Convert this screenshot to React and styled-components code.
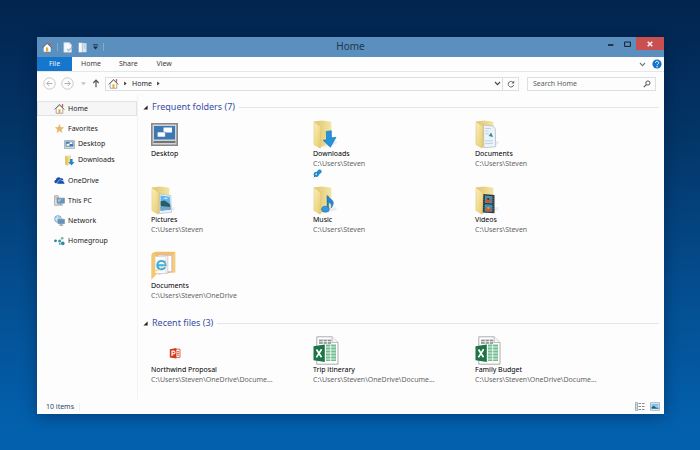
import styled, { createGlobalStyle } from "styled-components";

const GlobalStyle = createGlobalStyle`
  * {
    box-sizing: border-box;
  }

  body {
    margin: 0;
    font-family: "Noto Sans", "Open Sans", sans-serif;
    font-size: 7px;
    line-height: 10px;
    color: #1b1b1b;
  }

  button,
  input {
    font: inherit;
    color: inherit;
    border: 0;
    padding: 0;
    margin: 0;
    background: none;
  }
`;

const Desktop = styled.div`
  display: flex;
  min-height: 100vh;
  padding: 37px 36px 36px 37px;
  background: linear-gradient(#02244f 0%, #033567 30%, #044c8d 62%, #0360ad 95%, #0360ad 100%);
`;

const Window = styled.main`
  display: flex;
  flex-direction: column;
  flex: 1;
  min-width: 0;
  background: #fdfdfe;
  box-shadow: 0 2px 14px rgba(0, 15, 45, 0.4);
`;

const TitleBar = styled.header`
  display: grid;
  grid-template-columns: 1fr auto 1fr;
  height: 20px;
  background: #5a8fbe;
`;

const QuickAccess = styled.div`
  display: flex;
  align-items: center;
  gap: 5px;
  padding-left: 5px;
`;

const Separator = styled.span`
  width: 1px;
  height: 8px;
  background: ${(props) => props.$color || "#86a9c9"};
`;

const IconButton = styled.button`
  display: flex;
  align-items: center;
  justify-content: center;
  flex: none;
  width: ${(props) => props.$width || 10}px;
`;

const Title = styled.h1`
  margin: 0;
  font-size: 10px;
  font-weight: 400;
  line-height: 19px;
  color: #22384e;
`;

const Controls = styled.div`
  display: flex;
  justify-content: flex-end;
  align-items: flex-start;
`;

const ControlButton = styled.button`
  display: flex;
  align-items: center;
  justify-content: center;
  width: ${(props) => (props.$close ? 28 : 17)}px;
  height: 13px;
  background: ${(props) => (props.$close ? "#c94f50" : "transparent")};
`;

const Ribbon = styled.div`
  display: flex;
  align-items: center;
  height: 15px;
  padding-right: 2px;
  border-bottom: 1px solid #e4e6e9;
`;

const Tab = styled.button`
  height: 14px;
  padding: 0 9px;
  min-width: 35px;
  color: ${(props) => (props.$active ? "#e8f4ff" : "#3a3a3a")};
  background: ${(props) => (props.$active ? "#1477cd" : "transparent")};
`;

const RibbonEnd = styled.div`
  display: flex;
  gap: 5px;
  margin-left: auto;
`;

const Toolbar = styled.div`
  display: flex;
  align-items: center;
  gap: 5px;
  height: 23px;
  padding: 0 8px 0 6px;
`;

const AddressBar = styled.div`
  display: flex;
  align-items: center;
  gap: 4px;
  flex: 1;
  height: 14px;
  padding-left: 2px;
  border: 1px solid #dddfe2;
`;

const Crumb = styled.a`
  color: #1b1b1b;
  text-decoration: none;
`;

const AddressEnd = styled.div`
  display: flex;
  align-self: stretch;
  margin-left: auto;
`;

const Refresh = styled(IconButton)`
  border-left: 1px solid #dddfe2;
`;

const SearchBox = styled.label`
  display: flex;
  align-items: center;
  width: 129px;
  height: 14px;
  margin-left: 3px;
  padding: 0 4px 0 5px;
  border: 1px solid #dddfe2;
`;

const SearchInput = styled.input`
  flex: 1;
  min-width: 0;
  outline: 0;

  &::placeholder {
    color: #5c5c5c;
    opacity: 1;
  }
`;

const Body = styled.div`
  display: flex;
  flex: 1;
`;

const Sidebar = styled.nav`
  display: flex;
  flex-direction: column;
  gap: 5px;
  flex: none;
  width: 101px;
  padding-top: 6px;
  border-right: 1px solid #f1f3f6;
`;

const NavGroup = styled.div`
  display: flex;
  flex-direction: column;
`;

const NavLink = styled.a`
  display: flex;
  align-items: center;
  gap: 3px;
  height: ${(props) => (props.$nested ? 16 : 15)}px;
  padding-left: ${(props) => (props.$nested ? 27 : 17)}px;
  color: #1b1b1b;
  text-decoration: none;
  background: ${(props) => (props.$selected ? "#f6f6f6" : "transparent")};
  box-shadow: ${(props) => (props.$selected ? "inset 0 0 0 1px #e2e2e2" : "none")};
`;

const NavIcon = styled.span`
  display: flex;
  justify-content: center;
  flex: none;
  width: 11px;
`;

const Content = styled.div`
  display: flex;
  flex-direction: column;
  gap: 6px;
  flex: 1;
  min-width: 0;
  padding: 6px 5px 0 5px;
`;

const SectionHeader = styled.div`
  display: flex;
  align-items: center;
  gap: 4px;
  height: 12px;

  &::after {
    content: "";
    flex: 1;
    height: 1px;
    background: #e3e5ea;
  }
`;

const SectionTitle = styled.h2`
  margin: 0;
  font-size: 9px;
  font-weight: 400;
  line-height: 12px;
  color: #3a4da3;
`;

const Grid = styled.ul`
  display: grid;
  grid-template-columns: repeat(auto-fill, 162px);
  row-gap: 6px;
  margin: 0;
  padding: 6px 0 0 8px;
  list-style: none;
`;

const Item = styled.li`
  display: flex;
  flex-direction: column;
  height: 60px;
`;

const Thumb = styled.div`
  display: flex;
  align-items: center;
  height: 30px;
`;

const ItemName = styled.span`
  color: #000;
`;

const ItemPath = styled.span`
  color: #666;
`;

const StatusBar = styled.footer`
  display: flex;
  align-items: center;
  gap: 5px;
  height: 15px;
  padding: 0 4px 0 9px;
  color: #26466d;
`;

const ViewButtons = styled.div`
  display: flex;
  gap: 5px;
  margin-left: auto;
`;

function HomeIcon({ size = 11 }) {
  return (
    <svg width={size} height={size} viewBox="0 0 12 12" aria-hidden="true">
      <path d="M8.6 1.2h1.4v3h-1.4z" fill="#d65443" />
      <path d="M2.4 6.2v5h7.2v-5L6 2.4z" fill="#fff" stroke="#7c7c7c" strokeWidth=".7" />
      <path d="M.7 7 6 1.5 11.3 7" fill="none" stroke="#686868" strokeWidth="1" />
      <path d="M4.8 6.8h2.3v4.2H4.8z" fill="#edaa3b" />
    </svg>
  );
}

function QuickHomeIcon() {
  return (
    <svg width="10" height="10" viewBox="0 0 12 12" aria-hidden="true">
      <path d="M8.8 1h1.6v3.4H8.8z" fill="#d65443" />
      <path d="M2 6v5.6h8.4V6L6.2 2z" fill="#fff" />
      <path d="M.8 7 6.2 1.5 11.6 7" fill="none" stroke="#5c5550" strokeWidth=".9" />
      <path d="M4.7 6.5h2.8v5H4.7z" fill="#f0a63c" />
    </svg>
  );
}

function PropertiesIcon() {
  return (
    <svg width="10" height="11" viewBox="0 0 10 11" aria-hidden="true">
      <path d="M.8.6h5.6l2.1 2.2v7.5H.8z" fill="#f5f9fd" stroke="#b4c8db" strokeWidth=".6" />
      <path d="M6.2.7v2.2h2.2" fill="#d5e2ee" />
      <path d="m4 7 1.6 1.7L9.2 5" fill="none" stroke="#9eb8d2" strokeWidth="1.2" />
    </svg>
  );
}

function NewFolderIcon() {
  return (
    <svg width="10" height="11" viewBox="0 0 10 11" aria-hidden="true">
      <path d="M.7.8h4v9.5h-4z" fill="#f5f9fd" />
      <path d="M4.3 1.2h4.2v9H4.3z" fill="#dae6f1" />
      <path d="M4.3 1v9.3M6.8 2v5" stroke="#a3bad0" strokeWidth=".7" />
    </svg>
  );
}

function Triangle({ direction = "right", color = "#333", size = 5 }) {
  const points = {
    right: "1.2,.4 3.6,2.5 1.2,4.6",
    down: "0,1.2 5,1.2 2.5,4.2",
    corner: "4.6,.4 4.6,4.6 .4,4.6",
  };
  return (
    <svg width={size} height={size} viewBox="0 0 5 5" aria-hidden="true">
      <polygon points={points[direction]} fill={color} />
    </svg>
  );
}

function CustomizeIcon() {
  return (
    <svg width="5" height="6" viewBox="0 0 5 6" aria-hidden="true">
      <path d="M0 .8h5" stroke="#1d2e40" strokeWidth=".9" />
      <path d="M0 2.4h5L2.5 5.4z" fill="#1d2e40" />
    </svg>
  );
}

function Chevron({ color = "#777" }) {
  return (
    <svg width="7" height="5" viewBox="0 0 7 5" aria-hidden="true">
      <path d="m1 1 2.5 2.6L6 1" fill="none" stroke={color} strokeWidth="1.1" />
    </svg>
  );
}

function HelpIcon() {
  return (
    <svg width="10" height="10" viewBox="0 0 10 10" aria-hidden="true">
      <circle cx="5" cy="5" r="4.6" fill="#1671c9" />
      <path
        d="M3.5 3.8c0-2 3.2-2 3.2 0C6.7 5 5.1 4.9 5.1 6.2"
        fill="none"
        stroke="#fff"
        strokeWidth="1"
      />
      <circle cx="5.1" cy="7.8" r=".7" fill="#fff" />
    </svg>
  );
}

function RoundArrow({ flip }) {
  return (
    <svg width="13" height="13" viewBox="0 0 13 13" aria-hidden="true">
      <circle cx="6.5" cy="6.5" r="5.7" fill="none" stroke="#bdbdbd" strokeWidth=".8" />
      <path
        d={flip ? "M3.5 6.5H9M6.8 4 9.3 6.5 6.8 9" : "M9.5 6.5H4M6.2 4 3.7 6.5 6.2 9"}
        fill="none"
        stroke="#b0b0b0"
        strokeWidth="1"
      />
    </svg>
  );
}

function UpIcon() {
  return (
    <svg width="8" height="9" viewBox="0 0 8 9" aria-hidden="true">
      <path d="M4 8.2V1.4M1.3 4 4 1.2 6.7 4" fill="none" stroke="#555" strokeWidth="1.2" />
    </svg>
  );
}

function RefreshIcon() {
  return (
    <svg width="8" height="8" viewBox="0 0 8 8" aria-hidden="true">
      <path d="M6.6 3.1A2.8 2.8 0 1 0 6.7 5" fill="none" stroke="#666" strokeWidth="1" />
      <path d="M7.2.7v2.9H4.4z" fill="#666" />
    </svg>
  );
}

function SearchIcon() {
  return (
    <svg width="8" height="8" viewBox="0 0 8 8" aria-hidden="true">
      <circle cx="4.9" cy="3" r="2.1" fill="none" stroke="#555" strokeWidth="1" />
      <path d="M3.4 4.6.8 7.2" stroke="#555" strokeWidth="1.2" />
    </svg>
  );
}

function StarIcon() {
  return (
    <svg width="11" height="11" viewBox="0 0 11 11" aria-hidden="true">
      <path d="m5.5.9 1.3 3.2 3.4.3-2.6 2.2.8 3.4-2.9-1.9-2.9 1.9.8-3.4L.8 4.4l3.4-.3z" fill="#ebb768" />
    </svg>
  );
}

function DesktopIcon() {
  return (
    <svg width="27" height="23" viewBox="0 0 27 23" aria-hidden="true">
      <path d="M.8.8h25.4v21.4H.8z" fill="#d4d4d4" stroke="#888" strokeWidth="1.6" />
      <path d="M3 3h21v13.5H3z" fill="#3c78b5" />
      <path d="M12.5 4.5H21v5h-8.5z" fill="#fff" />
      <path d="M6.3 9h8v5h-8z" fill="#fff" stroke="#3c78b5" strokeWidth=".6" />
      <path d="M2.5 19h22" stroke="#555" strokeWidth="1.5" />
    </svg>
  );
}

function SmallDesktopIcon() {
  return (
    <svg width="11" height="9" viewBox="0 0 11 9" aria-hidden="true">
      <path d="M.5.5h10v8H.5z" fill="#dcdcdc" stroke="#a9b1b8" strokeWidth=".9" />
      <path d="M1.6 1.6h7.8v5H1.6z" fill="#3f7dba" />
      <path d="M5.6 2.2h2.8v1.7H5.6zM2.5 3.7h3v2h-3z" fill="#fff" />
    </svg>
  );
}

function OneDriveIcon() {
  return (
    <svg width="11" height="9" viewBox="0 0 11 9" aria-hidden="true">
      <path d="M.6 6.6C-.1 5.1 1 4 2 4c0-2.8 3.5-3.7 4.8-1.6 1.2-.4 2.4.3 2.5 1.5L4 7.2H1.4z" fill="#174ea6" />
      <path
        d="M3.8 8.1C2.6 7.8 2.7 6 4.1 5.8 4 3.8 6.8 3 7.8 4.7c1.2-.5 2.2.3 2.1 1.5 1.2.3 1 1.9 0 1.9z"
        fill="#1a55b3"
        stroke="#fff"
        strokeWidth=".5"
      />
    </svg>
  );
}

function PcIcon() {
  return (
    <svg width="11" height="11" viewBox="0 0 11 11" aria-hidden="true">
      <path d="M.7.8h3.5v9.4H.7z" fill="#eee" stroke="#888" strokeWidth=".7" />
      <path d="M1.5 2.5h2M1.5 4h1" stroke="#888" strokeWidth=".6" />
      <path d="M3 3.2h7.4v5H3z" fill="#5c96c8" stroke="#8a9299" strokeWidth=".8" />
      <path d="M4 4.2h4L5 7H4z" fill="#9dc3e2" />
      <path d="M6.7 8.2v1.6M4.5 10h4.4" stroke="#777" strokeWidth=".8" />
    </svg>
  );
}

function NetworkIcon() {
  return (
    <svg width="11" height="11" viewBox="0 0 11 11" aria-hidden="true">
      <circle cx="4" cy="4" r="3.4" fill="#a9d0e8" stroke="#6e9fc4" strokeWidth=".7" />
      <path d="M.8 4h6.4M4 .8C2.2 3 2.2 5 4 7.2" fill="none" stroke="#e6f3fa" strokeWidth=".7" />
      <path d="M4 4.3h6.4v4.3H4z" fill="#5b94c6" stroke="#858d95" strokeWidth=".8" />
      <path d="M7.2 8.7V10M5.3 10.2h3.9" stroke="#777" strokeWidth=".8" />
    </svg>
  );
}

function HomegroupIcon() {
  return (
    <svg width="11" height="10" viewBox="0 0 11 10" aria-hidden="true">
      <path d="m5.8 5.3 2.4-3M5.8 5.3l3 2" fill="none" stroke="#9bc9db" strokeWidth=".7" />
      <circle cx="1.5" cy="4.8" r="1.4" fill="#2c7eb0" />
      <circle cx="8.2" cy="2.2" r="1.3" fill="#77b98c" />
      <circle cx="5.6" cy="5.1" r="1.5" fill="#3b9b8e" />
      <circle cx="8.8" cy="7.4" r="1.8" fill="#3286b6" />
      <circle cx="5.8" cy="8.1" r="1" fill="#56a7c2" />
    </svg>
  );
}

function DownArrow() {
  return (
    <path
      d="m13.3 11.4 5-.6.2 7 4.5-.5-5.6 10-7.3-7 3.4-.6z"
      fill="#2592dc"
      stroke="#1270b8"
      strokeWidth=".6"
    />
  );
}

function DocumentPages() {
  return (
    <>
      <path d="m8.3 5 9.6 1 2.4 2.7.4 18-11.8 1.1z" fill="#eef3f8" stroke="#aab8c6" strokeWidth=".7" />
      <path d="m9.7 8.3 6.3.4M9.8 11l4 .2M9.8 13.6l4 .2M10 21l8-.2M10 23.7l8-.4" stroke="#b3c8dc" strokeWidth=".8" />
      <path d="m13.7 16 2.4-3.5 2 4.5z" fill="#2d8d9e" />
    </>
  );
}

function PicturePages() {
  return (
    <>
      <path d="m8.5 8 11.3 1.6.7 16.8-12.1 1.1z" fill="#e8f2fa" stroke="#a8b8c7" strokeWidth=".6" />
      <path d="m9.5 9.5 9.3 1.3.5 7.2-9.7 1z" fill="#63b4ea" />
      <path d="m9.6 15.3 4-.7 5.7 3.8.2 5-9.9 1.2z" fill="#295d61" />
      <path d="m9.6 20 9.8 1v2.7l-9.8 1.1z" fill="#71a6d2" />
      <path d="m12 12.6 3-1 2.4 1.5z" fill="#e8f8ff" />
    </>
  );
}

function MusicNote() {
  return (
    <>
      <path d="M14.8 10.2v12" stroke="#237dc3" strokeWidth="2" />
      <path
        d="M14.2 9.3c1.2 3 6.2 4.1 6.1 7.7-.1 2.3-1.1 4-2.1 5 1-4.3-.9-5.1-3.9-6z"
        fill="#2586d1"
        stroke="#1671b9"
        strokeWidth=".5"
      />
      <ellipse cx="12.4" cy="23.2" rx="3.9" ry="3" fill="#3498df" stroke="#1671b9" strokeWidth=".6" />
    </>
  );
}

function FilmStrip() {
  return (
    <>
      <path d="m8.2 8 11.3 1.1v18.1l-12-.7z" fill="#30353a" />
      <path d="m10 9.4 7.4.8v7.2L9.8 17zM9.8 18.2l7.6.5v7.1l-7.7-.4z" fill="#2e9acb" />
      <path d="m10.3 14.2 2.2-3 2.2 2.2 2.5-1-1.3 4.4-4 .1z" fill="#c55b34" />
      <path d="m10.2 23.2 2.2-3 2.2 2 2.5-1-1.3 4.2-4 .1z" fill="#c55b34" />
      <circle cx="13.3" cy="13" r="1.1" fill="#37372d" />
      <circle cx="13.3" cy="22" r="1.1" fill="#e0b33a" />
      <path d="m8.8 9 .1 17M18.6 10v16.5" stroke="#8d9ba3" strokeWidth=".5" strokeDasharray=".8 1.2" />
    </>
  );
}

function FolderIcon({ kind }) {
  return (
    <svg width="25" height="29" viewBox="0 0 25 29" aria-hidden="true">
      <defs>
        <linearGradient id={`flap-${kind}`} x1="0" y1="0" x2="1" y2="1">
          <stop offset="0" stopColor="#fbf0bd" />
          <stop offset="1" stopColor="#e6c967" />
        </linearGradient>
        <linearGradient id={`back-${kind}`} x1="0" y1="0" x2="1" y2="0">
          <stop offset="0" stopColor="#dfc46c" />
          <stop offset="1" stopColor="#f3e5a4" />
        </linearGradient>
      </defs>
      <path d="M9 28.3 23.5 24v-3l-7 1z" fill="#dfe2e7" opacity=".6" />
      <path d="m1 1.5 8-1 9.4 1.3v20.7L6.8 27.8z" fill={`url(#back-${kind})`} />
      {kind === "downloads" && <DownArrow />}
      {kind === "documents" && <DocumentPages />}
      {kind === "pictures" && <PicturePages />}
      {kind === "music" && <MusicNote />}
      {kind === "videos" && <FilmStrip />}
      <path
        d="m1 1.5 7 5.2-.8 21.5L.9 24.5z"
        fill={`url(#flap-${kind})`}
        stroke="#dcc16a"
        strokeWidth=".5"
      />
    </svg>
  );
}

function SmallDownloadsIcon() {
  return (
    <svg width="11" height="11" viewBox="0 0 11 11" aria-hidden="true">
      <path d="m1 .8 6-.3v8L3.6 10.6 1 9.3z" fill="#f0dc8c" />
      <path d="m1 .8 2.9 1.7-.3 8.2L1 9.3z" fill="#e3c563" />
      <path d="M6 4h2.6v3h1.9L7.5 10.6 4.3 7.1H6z" fill="#2187d4" />
    </svg>
  );
}

function SyncedFolderIcon() {
  return (
    <svg width="25" height="30" viewBox="0 0 25 30" aria-hidden="true">
      <path d="M.8 2.5 4 .8h20.2v20.4L7 23.5z" fill="#f1bf67" />
      <path d="m11 4 9.8.5v16L11 21z" fill="#fff" stroke="#cbb3cf" strokeWidth=".7" />
      <path d="m7.5 4 9.3.6v17.5L7 23z" fill="#fff" stroke="#c6b1c7" strokeWidth=".7" />
      <path d="M4 5.5h11v17H4z" fill="#fafafa" stroke="#cfcfd6" strokeWidth=".7" />
      <path
        d="M6.7 14.2h7.8c0-5.5-8.2-5.4-8.2-.1 0 4.8 5.7 5.3 7.8 2.1"
        fill="none"
        stroke="#36afe3"
        strokeWidth="2"
      />
      <path d="M5.2 18.8C3.2 20.7 7 19.8 10 17c3.8-3.5 5.9-7.2 4-7.4" fill="none" stroke="#eebd48" strokeWidth=".9" />
      <path d="M.3 4 4 1.2v20.6l2.7.5L.3 28.8z" fill="#f4c773" />
      <path d="M24.2 1v20.2l-2.5.3V3.5z" fill="#f5cd80" />
    </svg>
  );
}

function PowerPointIcon() {
  return (
    <svg width="46" height="29" viewBox="0 0 46 29" aria-hidden="true">
      <path d="M24 13.2h5v8.2h-5z" fill="#fff" stroke="#d6492d" strokeWidth=".8" />
      <path d="M25.8 15.7h2.4M25.8 17.4h2.4M25.8 19.2h2.4" stroke="#d6492d" strokeWidth=".9" />
      <path d="m18.8 13.3 6.6-1.2v10.5l-6.6-1.1z" fill="#d43b1d" />
      <path d="M21 19.9v-4.8h1.3c2.3 0 2.2 2.8 0 2.8H21" fill="none" stroke="#fff" strokeWidth="1.1" />
    </svg>
  );
}

function ExcelIcon() {
  return (
    <svg width="26" height="29" viewBox="0 0 26 29" aria-hidden="true">
      <path d="M3.8.8h15.3L25 6.5v21.7H3.8z" fill="#fff" stroke="#a4a4a4" strokeWidth=".9" />
      <path d="M19.1.8v5.7H25" fill="#f5f5f5" stroke="#a4a4a4" strokeWidth=".7" />
      <path d="M6 3.6h12.2v4.2H6z" fill="#8f8f8f" />
      <path d="M13 8.5h10V25H13z" fill="#72bd91" />
      <path d="M12.8 11h10M12.8 14h10M12.8 17h10M12.8 20h10M12.8 23h10M17.7 8.5V25M10.2 3.5v4.7M14.3 3.5v4.7M6 5.7h12" stroke="#fff" strokeWidth=".8" />
      <path d="m.5 10.2 11.3-1.6v17.3L.5 24.2z" fill="#1d7446" />
      <path d="m3.5 13.5 5 7.8M8.6 13.2l-5.2 8.2" stroke="#fff" strokeWidth="1.7" />
    </svg>
  );
}

function PinIcon() {
  return (
    <svg width="9" height="9" viewBox="0 0 9 9" aria-hidden="true">
      <path d="M4 2.6 6 .6 8.5 3 6.6 5.2 5 6z" fill="#268fd7" />
      <circle cx="6.6" cy="2.5" r="2" fill="#268fd7" />
      <circle cx="3.3" cy="5.3" r="2.6" fill="#2285cc" />
      <circle cx="3.2" cy="5.2" r="1" fill="#a6dcf7" />
      <path d="M2.4 6.6.7 8.3" stroke="#1c6da9" strokeWidth=".9" />
    </svg>
  );
}

function ListViewIcon() {
  return (
    <svg width="10" height="9" viewBox="0 0 10 9" aria-hidden="true">
      <path d="M.5.5h2v8h-2z" fill="#e6eaf0" stroke="#7c8796" strokeWidth=".6" />
      <path d="M3.5 1.5H6M7 1.5h2.5M3.5 4.5H6M7 4.5h2.5M3.5 7.5H6M7 7.5h2.5" stroke="#6f7a88" strokeWidth=".9" />
      <path d="M.5 3h2M.5 6h2" stroke="#7c8796" strokeWidth=".5" />
    </svg>
  );
}

function LargeViewIcon() {
  return (
    <svg width="10" height="9" viewBox="0 0 10 9" aria-hidden="true">
      <path d="M.5.7h9v7.6h-9z" fill="#e6f2fb" stroke="#91aac3" strokeWidth=".8" />
      <path d="M1.5 1.8h7v3h-7z" fill="#84c4ea" />
      <path d="M1.5 5 4 3.8 6 5.5h2.5v1.3h-7z" fill="#1f6378" />
    </svg>
  );
}

const navGroups = [
  [{ name: "Home", icon: <HomeIcon />, selected: true }],
  [
    { name: "Favorites", icon: <StarIcon /> },
    { name: "Desktop", icon: <SmallDesktopIcon />, nested: true },
    { name: "Downloads", icon: <SmallDownloadsIcon />, nested: true },
  ],
  [{ name: "OneDrive", icon: <OneDriveIcon /> }],
  [{ name: "This PC", icon: <PcIcon /> }],
  [{ name: "Network", icon: <NetworkIcon /> }],
  [{ name: "Homegroup", icon: <HomegroupIcon /> }],
];

const folders = [
  { name: "Desktop", icon: <DesktopIcon /> },
  { name: "Downloads", path: "C:\\Users\\Steven", icon: <FolderIcon kind="downloads" />, pinned: true },
  { name: "Documents", path: "C:\\Users\\Steven", icon: <FolderIcon kind="documents" /> },
  { name: "Pictures", path: "C:\\Users\\Steven", icon: <FolderIcon kind="pictures" /> },
  { name: "Music", path: "C:\\Users\\Steven", icon: <FolderIcon kind="music" /> },
  { name: "Videos", path: "C:\\Users\\Steven", icon: <FolderIcon kind="videos" /> },
  { name: "Documents", path: "C:\\Users\\Steven\\OneDrive", icon: <SyncedFolderIcon /> },
];

const files = [
  { name: "Northwind Proposal", path: "C:\\Users\\Steven\\OneDrive\\Docume...", icon: <PowerPointIcon /> },
  { name: "Trip itinerary", path: "C:\\Users\\Steven\\OneDrive\\Docume...", icon: <ExcelIcon /> },
  { name: "Family Budget", path: "C:\\Users\\Steven\\OneDrive\\Docume...", icon: <ExcelIcon /> },
];

function ItemSection({ title, items }) {
  return (
    <section>
      <SectionHeader>
        <IconButton $width={5} aria-label={`Collapse ${title}`}>
          <Triangle direction="corner" color="#222" />
        </IconButton>
        <SectionTitle>{title}</SectionTitle>
      </SectionHeader>
      <Grid>
        {items.map((item, index) => (
          <Item key={index}>
            <Thumb>{item.icon}</Thumb>
            <ItemName>{item.name}</ItemName>
            {item.path && <ItemPath>{item.path}</ItemPath>}
            {item.pinned && <PinIcon />}
          </Item>
        ))}
      </Grid>
    </section>
  );
}

export default function App() {
  return (
    <>
      <GlobalStyle />
      <Desktop>
        <Window>
          <TitleBar>
            <QuickAccess>
              <QuickHomeIcon />
              <Separator />
              <IconButton aria-label="Properties">
                <PropertiesIcon />
              </IconButton>
              <IconButton aria-label="New folder">
                <NewFolderIcon />
              </IconButton>
              <IconButton $width={5} aria-label="Customize toolbar">
                <CustomizeIcon />
              </IconButton>
              <Separator />
            </QuickAccess>
            <Title>Home</Title>
            <Controls>
              <ControlButton aria-label="Minimize">
                <svg width="6" height="7" viewBox="0 0 6 7" aria-hidden="true">
                  <path d="M0 5h5.4" stroke="#17212c" strokeWidth="1.6" />
                </svg>
              </ControlButton>
              <ControlButton aria-label="Maximize">
                <svg width="7" height="6" viewBox="0 0 7 6" aria-hidden="true">
                  <path d="M.6 1h5.8v4.4H.6z" fill="none" stroke="#17212c" strokeWidth="1" />
                </svg>
              </ControlButton>
              <ControlButton $close aria-label="Close">
                <svg width="6" height="6" viewBox="0 0 6 6" aria-hidden="true">
                  <path d="m.7.7 4.6 4.6M5.3.7.7 5.3" stroke="#fff" strokeWidth="1.3" />
                </svg>
              </ControlButton>
            </Controls>
          </TitleBar>

          <Ribbon>
            <Tab $active>File</Tab>
            <Tab>Home</Tab>
            <Tab>Share</Tab>
            <Tab>View</Tab>
            <RibbonEnd>
              <IconButton aria-label="Expand ribbon">
                <Chevron />
              </IconButton>
              <IconButton aria-label="Help">
                <HelpIcon />
              </IconButton>
            </RibbonEnd>
          </Ribbon>

          <Toolbar>
            <IconButton $width={13} aria-label="Back">
              <RoundArrow />
            </IconButton>
            <IconButton $width={13} aria-label="Forward">
              <RoundArrow flip />
            </IconButton>
            <IconButton $width={8} aria-label="Recent locations">
              <Triangle direction="down" color="#c4c4c4" />
            </IconButton>
            <IconButton $width={8} aria-label="Up">
              <UpIcon />
            </IconButton>
            <AddressBar>
              <HomeIcon />
              <Triangle />
              <Crumb href="#home">Home</Crumb>
              <Triangle />
              <AddressEnd>
                <IconButton $width={10} aria-label="Previous locations">
                  <Chevron color="#444" />
                </IconButton>
                <Refresh $width={16} aria-label="Refresh">
                  <RefreshIcon />
                </Refresh>
              </AddressEnd>
            </AddressBar>
            <SearchBox>
              <SearchInput type="text" placeholder="Search Home" aria-label="Search Home" />
              <SearchIcon />
            </SearchBox>
          </Toolbar>

          <Body>
            <Sidebar aria-label="Locations">
              {navGroups.map((group) => (
                <NavGroup key={group[0].name}>
                  {group.map((link) => (
                    <NavLink
                      key={link.name}
                      href={`#${link.name}`}
                      $nested={link.nested}
                      $selected={link.selected}
                    >
                      <NavIcon>{link.icon}</NavIcon>
                      {link.name}
                    </NavLink>
                  ))}
                </NavGroup>
              ))}
            </Sidebar>
            <Content>
              <ItemSection title="Frequent folders (7)" items={folders} />
              <ItemSection title="Recent files (3)" items={files} />
            </Content>
          </Body>

          <StatusBar>
            <span>10 items</span>
            <Separator $color="#eef0f3" />
            <ViewButtons>
              <IconButton aria-label="Details view">
                <ListViewIcon />
              </IconButton>
              <IconButton aria-label="Large icons view">
                <LargeViewIcon />
              </IconButton>
            </ViewButtons>
          </StatusBar>
        </Window>
      </Desktop>
    </>
  );
}
